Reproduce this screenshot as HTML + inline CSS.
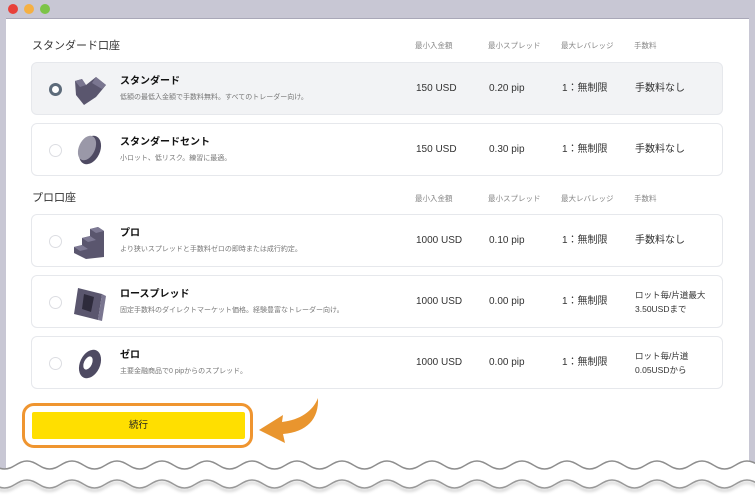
<!DOCTYPE html>
<html><head><meta charset="utf-8"><style>
*{margin:0;padding:0;box-sizing:border-box}
body{width:755px;height:498px;overflow:hidden;background:#fff;font-family:"Liberation Sans","Noto Sans CJK JP",sans-serif;position:relative;color:#222}
.frame{position:absolute;left:0;top:0;width:755px;height:480px;background:#c8c7d4}
.content{position:absolute;left:6px;top:18px;width:743px;height:462px;background:#fff;border-top:1px solid #a9a8b8}
.dot{position:absolute;top:4px;width:10px;height:10px;border-radius:50%}
.h{position:absolute;font-size:11px;color:#333}
.ch{position:absolute;font-size:7.5px;color:#888}
.card{position:absolute;left:31px;width:692px;height:53px;border:1px solid #e6e8ec;border-radius:6px;background:#fff}
.card.sel{background:#f2f3f5}
.radio{position:absolute;left:17px;top:20px;width:13px;height:13px;border-radius:50%;border:1px solid #dcdde2;background:#fff}
.sel .radio{border:3.5px solid #5d6b7a}
.ic{position:absolute;left:40px;top:8px}
.t{position:absolute;left:88px;top:12px;font-size:10px;line-height:14px;font-weight:bold;color:#111}
.d{position:absolute;left:88px;top:30px;font-size:7px;line-height:10px;color:#777}
.c{position:absolute;top:19px;font-size:10px;line-height:14px;color:#333}
.c2{position:absolute;font-size:8.5px;color:#333;line-height:14px}
</style></head><body>
<div class="frame"></div>
<div class="dot" style="left:8px;background:#e8403a"></div>
<div class="dot" style="left:24px;background:#f5b043"></div>
<div class="dot" style="left:40px;background:#7cc447"></div>
<div class="content"></div>

<div class="h" style="left:32px;top:37px">スタンダード口座</div>
<div class="ch" style="left:415px;top:40px">最小入金額</div>
<div class="ch" style="left:488px;top:40px">最小スプレッド</div>
<div class="ch" style="left:561px;top:40px">最大レバレッジ</div>
<div class="ch" style="left:634px;top:40px">手数料</div>

<div class="card sel" style="top:62px">
<div class="radio"></div>
<svg class="ic" width="40" height="36" viewBox="0 0 40 36"><polygon points="3,10 10,8 14,14 24,6 34,14 24,26 12,34 4,24" fill="#5a566e"/><polygon points="24,6 34,14 30,18 20,12" fill="#7a7690"/><polygon points="3,10 10,8 14,14 8,16" fill="#7a7690"/></svg>
<div class="t">スタンダード</div><div class="d">低額の最低入金額で手数料無料。すべてのトレーダー向け。</div>
<div class="c" style="left:384px">150 USD</div><div class="c" style="left:457px">0.20 pip</div><div class="c" style="left:530px">1：無制限</div><div class="c" style="left:603px">手数料なし</div>
</div>

<div class="card" style="top:123px">
<div class="radio"></div>
<svg class="ic" width="40" height="36" viewBox="0 0 40 36"><ellipse cx="18" cy="18" rx="10" ry="15" transform="rotate(25 18 18)" fill="#4e4a62"/><ellipse cx="15" cy="16" rx="8" ry="13" transform="rotate(25 15 16)" fill="#9a98a8"/></svg>
<div class="t">スタンダードセント</div><div class="d">小ロット、低リスク。練習に最適。</div>
<div class="c" style="left:384px">150 USD</div><div class="c" style="left:457px">0.30 pip</div><div class="c" style="left:530px">1：無制限</div><div class="c" style="left:603px">手数料なし</div>
</div>

<div class="h" style="left:32px;top:189px">プロ口座</div>
<div class="ch" style="left:415px;top:193px">最小入金額</div>
<div class="ch" style="left:488px;top:193px">最小スプレッド</div>
<div class="ch" style="left:561px;top:193px">最大レバレッジ</div>
<div class="ch" style="left:634px;top:193px">手数料</div>

<div class="card" style="top:214px">
<div class="radio"></div>
<svg class="ic" width="40" height="38" viewBox="0 0 40 38"><polygon points="2,24 10,22 10,15 18,13 18,6 26,4 32,8 32,34 14,36 2,30" fill="#5a566e"/><polygon points="18,6 26,4 32,8 24,10" fill="#7e7a94"/><polygon points="10,15 18,13 24,17 16,19" fill="#7e7a94"/><polygon points="2,24 10,22 16,26 8,28" fill="#7e7a94"/></svg>
<div class="t">プロ</div><div class="d">より狭いスプレッドと手数料ゼロの即時または成行約定。</div>
<div class="c" style="left:384px">1000 USD</div><div class="c" style="left:457px">0.10 pip</div><div class="c" style="left:530px">1：無制限</div><div class="c" style="left:603px">手数料なし</div>
</div>

<div class="card" style="top:275px">
<div class="radio"></div>
<svg class="ic" width="40" height="38" viewBox="0 0 40 38"><polygon points="6,4 30,10 26,36 2,30" fill="#5a566e"/><polygon points="12,10 22,13 19,28 10,25" fill="#2e2b3c"/><polygon points="30,10 34,12 30,37 26,36" fill="#7a7690"/></svg>
<div class="t">ロースプレッド</div><div class="d">固定手数料のダイレクトマーケット価格。経験豊富なトレーダー向け。</div>
<div class="c" style="left:384px">1000 USD</div><div class="c" style="left:457px">0.00 pip</div><div class="c" style="left:530px">1：無制限</div>
<div class="c2" style="left:603px;top:12px">ロット毎/片道最大<br>3.50USDまで</div>
</div>

<div class="card" style="top:336px">
<div class="radio"></div>
<svg class="ic" width="40" height="38" viewBox="0 0 40 38"><ellipse cx="18" cy="19" rx="10" ry="15" transform="rotate(25 18 19)" fill="#4e4a62"/><ellipse cx="16" cy="18" rx="4" ry="7" transform="rotate(25 16 18)" fill="#fff"/></svg>
<div class="t">ゼロ</div><div class="d">主要金融商品で0 pipからのスプレッド。</div>
<div class="c" style="left:384px">1000 USD</div><div class="c" style="left:457px">0.00 pip</div><div class="c" style="left:530px">1：無制限</div>
<div class="c2" style="left:603px;top:12px">ロット毎/片道<br>0.05USDから</div>
</div>

<div style="position:absolute;left:22px;top:403px;width:231px;height:45px;border:3px solid #ef9530;border-radius:12px;background:#fff"></div>
<div style="position:absolute;left:32px;top:412px;width:213px;height:27px;background:#ffdf00;border-radius:2px;font-size:9.5px;text-align:center;line-height:27px;color:#222">続行</div>
<svg style="position:absolute;left:255px;top:395px" width="70" height="55" viewBox="0 0 70 55"><path d="M4,35 L28,20 L27,27 C45,25 58,16 63,3 C64,24 52,37 28,39 L30,48 Z" fill="#e9952e"/></svg>

<svg style="position:absolute;left:0;top:0" width="755" height="498" viewBox="0 0 755 498">
<defs><filter id="s" x="-5%" y="-50%" width="110%" height="300%"><feDropShadow dx="0" dy="2.5" stdDeviation="1.5" flood-color="#000" flood-opacity="0.3"/></filter></defs>
<path d="M-40.5,469 c9,0 13.5,-8 22.5,-8 s13.5,8 22.5,8 s13.5,-8 22.5,-8 s13.5,8 22.5,8 s13.5,-8 22.5,-8 s13.5,8 22.5,8 s13.5,-8 22.5,-8 s13.5,8 22.5,8 s13.5,-8 22.5,-8 s13.5,8 22.5,8 s13.5,-8 22.5,-8 s13.5,8 22.5,8 s13.5,-8 22.5,-8 s13.5,8 22.5,8 s13.5,-8 22.5,-8 s13.5,8 22.5,8 s13.5,-8 22.5,-8 s13.5,8 22.5,8 s13.5,-8 22.5,-8 s13.5,8 22.5,8 s13.5,-8 22.5,-8 s13.5,8 22.5,8 s13.5,-8 22.5,-8 s13.5,8 22.5,8 s13.5,-8 22.5,-8 s13.5,8 22.5,8 s13.5,-8 22.5,-8 s13.5,8 22.5,8 s13.5,-8 22.5,-8 s13.5,8 22.5,8 s13.5,-8 22.5,-8 s13.5,8 22.5,8 s13.5,-8 22.5,-8 s13.5,8 22.5,8 s13.5,-8 22.5,-8 s13.5,8 22.5,8 s13.5,-8 22.5,-8 s13.5,8 22.5,8 L800,498 L-41,498 Z" fill="#fff"/>
<path d="M-40.5,469 c9,0 13.5,-8 22.5,-8 s13.5,8 22.5,8 s13.5,-8 22.5,-8 s13.5,8 22.5,8 s13.5,-8 22.5,-8 s13.5,8 22.5,8 s13.5,-8 22.5,-8 s13.5,8 22.5,8 s13.5,-8 22.5,-8 s13.5,8 22.5,8 s13.5,-8 22.5,-8 s13.5,8 22.5,8 s13.5,-8 22.5,-8 s13.5,8 22.5,8 s13.5,-8 22.5,-8 s13.5,8 22.5,8 s13.5,-8 22.5,-8 s13.5,8 22.5,8 s13.5,-8 22.5,-8 s13.5,8 22.5,8 s13.5,-8 22.5,-8 s13.5,8 22.5,8 s13.5,-8 22.5,-8 s13.5,8 22.5,8 s13.5,-8 22.5,-8 s13.5,8 22.5,8 s13.5,-8 22.5,-8 s13.5,8 22.5,8 s13.5,-8 22.5,-8 s13.5,8 22.5,8 s13.5,-8 22.5,-8 s13.5,8 22.5,8 s13.5,-8 22.5,-8 s13.5,8 22.5,8 s13.5,-8 22.5,-8 s13.5,8 22.5,8 s13.5,-8 22.5,-8 s13.5,8 22.5,8" fill="none" stroke="#8e8e8e" stroke-width="1.5"/>
<path d="M-40.5,488 c9,0 13.5,-8 22.5,-8 s13.5,8 22.5,8 s13.5,-8 22.5,-8 s13.5,8 22.5,8 s13.5,-8 22.5,-8 s13.5,8 22.5,8 s13.5,-8 22.5,-8 s13.5,8 22.5,8 s13.5,-8 22.5,-8 s13.5,8 22.5,8 s13.5,-8 22.5,-8 s13.5,8 22.5,8 s13.5,-8 22.5,-8 s13.5,8 22.5,8 s13.5,-8 22.5,-8 s13.5,8 22.5,8 s13.5,-8 22.5,-8 s13.5,8 22.5,8 s13.5,-8 22.5,-8 s13.5,8 22.5,8 s13.5,-8 22.5,-8 s13.5,8 22.5,8 s13.5,-8 22.5,-8 s13.5,8 22.5,8 s13.5,-8 22.5,-8 s13.5,8 22.5,8 s13.5,-8 22.5,-8 s13.5,8 22.5,8 s13.5,-8 22.5,-8 s13.5,8 22.5,8 s13.5,-8 22.5,-8 s13.5,8 22.5,8 s13.5,-8 22.5,-8 s13.5,8 22.5,8 s13.5,-8 22.5,-8 s13.5,8 22.5,8 s13.5,-8 22.5,-8 s13.5,8 22.5,8" fill="none" stroke="#999" stroke-width="1.5" filter="url(#s)"/>
</svg>
</body></html>
